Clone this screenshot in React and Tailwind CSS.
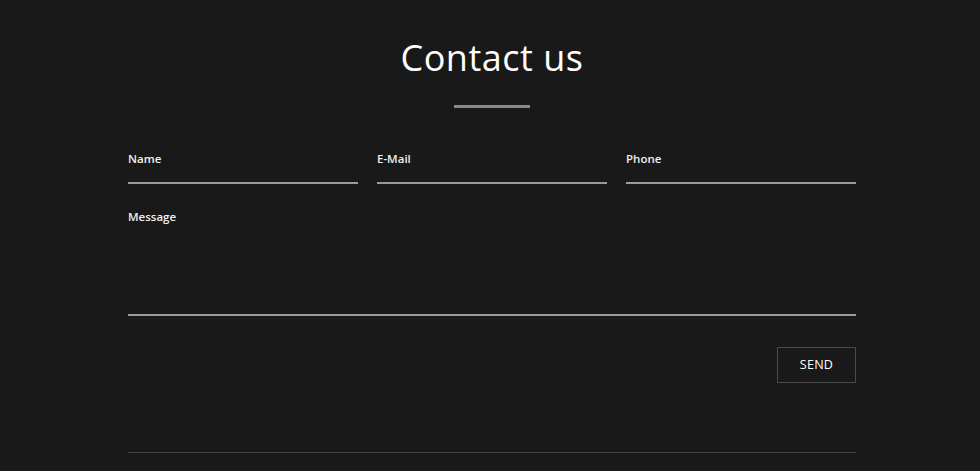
export default function App() {
  const font = { fontFamily: '"Open Sans", "Noto Sans", sans-serif' };
  return (
    <div className="min-h-[471px] bg-[#191919] text-white" style={font}>
      <div className="w-[728px] ml-[128px] pt-[34px]">
        <h1 className="text-center text-[36px] leading-[48px] font-normal tracking-[0.5px] text-white">Contact us</h1>
        <div className="flex justify-center mt-[23px]">
          <div className="w-[76px] h-[3px] bg-[#8a8a8a]"></div>
        </div>
        <div className="grid grid-cols-3 gap-x-[19px] mt-[44px]">
          {["Name", "E-Mail", "Phone"].map((l) => (
            <div key={l} className="flex flex-col">
              <label className="text-[11.5px] leading-[14px] font-semibold text-[#f0f0f0]">{l}</label>
              <div className="h-[16px]"></div>
              <div className="h-[2px] bg-[#9a9a9a]"></div>
            </div>
          ))}
        </div>
        <div className="flex flex-col mt-[26px]">
          <label className="text-[11.5px] leading-[14px] font-semibold text-[#f0f0f0]">Message</label>
          <div className="h-[90px]"></div>
          <div className="h-[2px] bg-[#9a9a9a]"></div>
        </div>
        <div className="flex justify-end mt-[31px]">
          <button className="w-[79px] h-[36px] border border-[#4a4a4a] text-[12.5px] font-medium tracking-[0.3px] text-white">SEND</button>
        </div>
        <div className="h-[1px] bg-[#444] mt-[69px]"></div>
      </div>
    </div>
  );
}
